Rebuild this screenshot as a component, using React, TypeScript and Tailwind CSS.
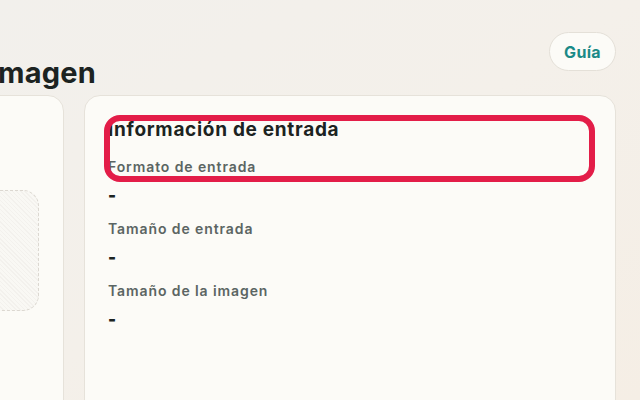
interface InfoRowProps {
    label: string;
    value: string;
}

const InfoRow = ({ label, value }: InfoRowProps) => {
    return (
        <div className="flex flex-col">
            <div className="text-[14px] leading-[20px] font-semibold tracking-[0.9px] text-[#5b6563]">{label}</div>
            <div className="mt-[6px] text-[17px] leading-[24px] font-black text-[#1c2321]">{value}</div>
        </div>
    );
};

export default function App() {
    return (
        <div
            className="w-[640px] h-[400px] overflow-hidden bg-gradient-to-br from-[#f2f0ec] via-[#f4f0ea] to-[#f5eee5] text-[#1c2321]"
            style={{ fontFamily: "Inter, 'Noto Sans', sans-serif" }}
        >
            <div className="flex flex-col pt-[32px] pr-[24px]">
                {/* header: page title + guide button */}
                <div className="flex items-start justify-between h-[63px]">
                    <div className="w-[96px] flex justify-end pt-[25px]">
                        <h1 className="whitespace-nowrap text-[29px] leading-[32px] font-bold tracking-[0.2px]">
                            Comprimir imagen
                        </h1>
                    </div>
                    <button className="h-[39px] w-[67px] rounded-full border border-[#e4e0d8] bg-[#fcfbf7] text-[16px] font-bold tracking-[0.3px] text-[#1b8a87]">
                        Guía
                    </button>
                </div>

                <div className="flex gap-[20px] h-[330px]">
                    {/* upload panel */}
                    <div className="-ml-[16px] w-[80px] shrink-0 rounded-2xl border border-[#e6e2da] bg-[#fcfbf7] pt-[94px] pr-[24px]">
                        <div className="h-[121px] rounded-r-2xl border border-dashed border-[#dcd8d1] bg-[repeating-linear-gradient(45deg,#f3f1ed_0,#f3f1ed_1px,#f9f8f4_1px,#f9f8f4_3px)]" />
                    </div>

                    {/* input details */}
                    <div className="relative flex-1 rounded-2xl border border-[#e6e2da] bg-[#fcfbf7] pt-[20px] pl-[23px]">
                        <h2 className="text-[19px] leading-[28px] font-bold tracking-[0.7px]">Información de entrada</h2>
                        <div className="mt-[13px] flex flex-col gap-[12px]">
                            <InfoRow label="Formato de entrada" value="-" />
                            <InfoRow label="Tamaño de entrada" value="-" />
                            <InfoRow label="Tamaño de la imagen" value="-" />
                        </div>
                        <div className="absolute left-[19px] top-[19px] right-[20px] h-[67px] rounded-[16px] border-[6px] border-[#e31d48] pointer-events-none" />
                    </div>
                </div>
            </div>
        </div>
    );
}
